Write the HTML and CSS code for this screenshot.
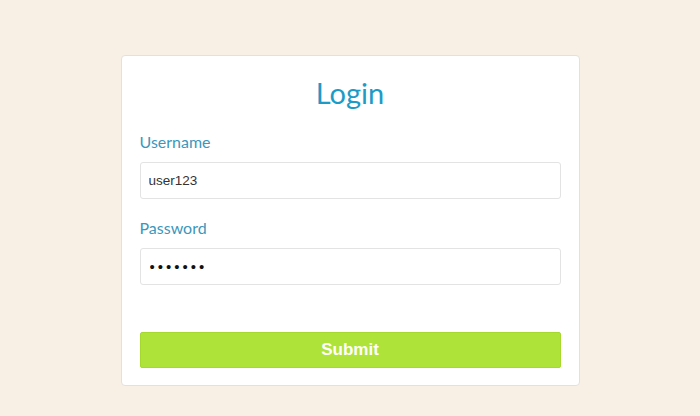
FILE: index.html
```html
<!DOCTYPE html>
<html>
<head>
<meta charset="utf-8">
<link rel="stylesheet" href="styles.css">
</head>
<body>
<div class="page">
  <form class="card">
    <h1 class="title">Login</h1>
    <label class="label" for="u">Username</label>
    <input class="field" id="u" type="text" value="user123">
    <label class="label label-pw" for="p">Password</label>
    <input class="field field-pw" id="p" type="password" value="abcdefg">
    <button class="submit" type="button">Submit</button>
  </form>
</div>
</body>
</html>
```
FILE: styles.css
```css
html, body {
  margin: 0;
  padding: 0;
  background: #f8f0e5;
  height: 100%;
}
.page {
  display: flex;
  justify-content: center;
  padding-top: 55px;
}
.card {
  box-sizing: border-box;
  width: 459px;
  background: #ffffff;
  border: 1px solid #e4e1dc;
  border-radius: 4px;
  padding: 20px 18px 17px 18px;
  display: flex;
  flex-direction: column;
}
.title {
  margin: 0;
  font-family: "Lato", "Open Sans", sans-serif;
  font-weight: 400;
  font-size: 29px;
  line-height: 34px;
  color: #1d9bc6;
  text-align: center;
}
.label {
  margin-top: 22px;
  font-family: "Lato", sans-serif;
  font-size: 16px;
  line-height: 20px;
  color: #3d96bb;
}
.label-pw {
  margin-top: 19px;
}
.field {
  box-sizing: border-box;
  margin: 10px 0 0 0;
  height: 37px;
  width: 100%;
  border: 1px solid #e3e3e3;
  border-radius: 3px;
  padding: 0 8px;
  font-family: "Liberation Sans", Arial, sans-serif;
  font-size: 13.5px;
  color: #333333;
  background: #ffffff;
  outline: none;
}
.field-pw {
  padding-left: 9px;
  font-size: 15px;
  letter-spacing: 3px;
  color: #111111;
}
.submit {
  margin-top: 47px;
  height: 36px;
  width: 100%;
  border: 1px solid #a5da2c;
  border-radius: 2px;
  background: #aee33a;
  color: #ffffff;
  font-family: "Liberation Sans", Arial, sans-serif;
  font-weight: bold;
  font-size: 17px;
  padding: 0;
}
```
